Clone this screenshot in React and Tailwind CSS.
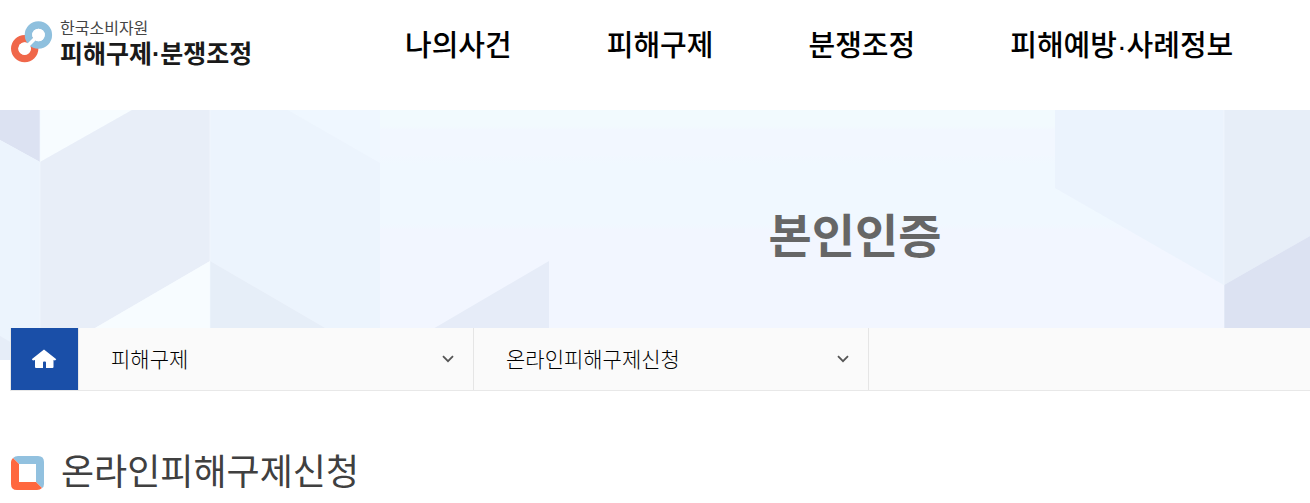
import React from 'react';

const menus = ['나의사건', '피해구제', '분쟁조정', '피해예방·사례정보'];
const paths = ['피해구제', '온라인피해구제신청'];

const LogoMark = () => (
  <svg width="42" height="42" viewBox="0 0 42 42" fill="none" aria-hidden="true">
    <circle cx="13.7" cy="27.6" r="10" stroke="#f0674a" strokeWidth="7.4" />
    <circle cx="27.4" cy="14" r="10" stroke="#8fc0de" strokeWidth="7.4" />
    <path d="M15 26.5L26 15.5" stroke="#fff" strokeWidth="3.6" />
    <circle cx="13.5" cy="27.6" r="6.2" fill="#fff" />
    <circle cx="27.6" cy="14" r="6.2" fill="#fff" />
  </svg>
);

const BannerPattern = () => (
  <svg className="absolute top-0 left-0" width="1710" height="250" viewBox="0 0 1710 250" aria-hidden="true">
    <path d="M0 0H40V52L0 30Z" fill="#dce2f2" />
    <path d="M0 30L40 52V250H0Z" fill="#ecf4fd" />
    <path d="M0 226L40 249V250H0Z" fill="#e6edf8" />
    <path d="M40 0H132L40 52Z" fill="#f7fcff" />
    <path d="M132 0H210V151L40 250V52Z" fill="#e8eef8" />
    <path d="M210 151V250H40Z" fill="#f7fcff" />
    <path d="M288 0H380V53Z" fill="#eff7ff" />
    <path d="M210 0H288L380 53V250L210 151Z" fill="#ecf4fd" />
    <path d="M210 151L380 250H210Z" fill="#e6eef8" />
    <path d="M549 151V250H380Z" fill="#e6ecf8" />
    <path d="M1055 0H1224V175L1055 78Z" fill="#ebf3fd" />
    <path d="M1224 0H1394V78L1224 175Z" fill="#e7eef8" />
    <path d="M1224 175L1394 78V250H1224Z" fill="#dce2f2" />
    <path d="M40 0V250M210 0V250M1224 0V250" stroke="#f3f8ff" strokeOpacity="0.6" />
  </svg>
);

const HomeIcon = () => (
  <svg width="26" height="20" viewBox="0 0 26 20" fill="#fff" aria-hidden="true">
    <path d="M12 0.5L24.3 10.2L23 11.6L21.5 11V18Q21.5 19 20.5 19H14V13.5Q14 12.5 13 12.5H12Q11 12.5 11 13.5V19H4Q3 19 3 18V11L1 11.6L-0.3 10.2Z" />
  </svg>
);

const ChevronIcon = () => (
  <svg width="12" height="8" viewBox="0 0 12 8" fill="none" stroke="#555" strokeWidth="1.8" aria-hidden="true">
    <path d="M1 1.2L6 6.2L11 1.2" />
  </svg>
);

const TitleMark = () => (
  <svg width="33" height="34" viewBox="0 0 33 34" aria-hidden="true">
    <path d="M2 2Q4 0 7 0H27Q33 0 33 6V28Q33 31 31 32L25 26V8H8Z" fill="#92c1df" />
    <path d="M2 2L8 8V26H25L31 32Q29 34 26 34H6Q0 34 0 28V6Q0 4 2 2Z" fill="#ff683f" />
  </svg>
);

const Header = () => (
  <header className="flex h-[110px] items-start pl-[11px]">
    <a href="#" className="mt-[21px] flex w-[394px] shrink-0 items-start gap-[7px]">
      <LogoMark />
      <span className="flex flex-col">
        <span className="text-base leading-4 text-[#444]">한국소비자원</span>
        <span className="text-[25px] leading-[34px] font-bold text-[#1a1a1a]">피해구제·분쟁조정</span>
      </span>
    </a>
    <nav className="mt-[26px] flex gap-[95px] whitespace-nowrap">
      {menus.map((menu) => (
        <a key={menu} href="#" className="text-[29px] leading-10 font-medium text-black">
          {menu}
        </a>
      ))}
    </nav>
  </header>
);

const Breadcrumb = () => (
  <nav className="relative -mt-8 ml-[10px] flex h-[63px] border-b border-l border-[#e8e8e8] bg-[#fafafa]">
    <a
      href="#"
      aria-label="홈"
      className="flex w-[68px] shrink-0 items-center justify-center border-r border-[#e8e8e8] bg-[#1a4fa8]"
    >
      <HomeIcon />
    </a>
    {paths.map((path) => (
      <button
        key={path}
        type="button"
        aria-haspopup="true"
        className="flex w-[395px] items-center justify-between border-r border-[#e5e5e5] pr-[19px] pl-8 text-[21px] font-light text-black"
      >
        <span className="pt-[2px]">{path}</span>
        <ChevronIcon />
      </button>
    ))}
  </nav>
);

const App = () => {
  return (
    <div className="overflow-hidden bg-white font-['Liberation_Sans','Noto_Sans_CJK_KR',sans-serif]">
      <Header />
      <section className="relative h-[250px] overflow-hidden bg-[linear-gradient(#f2fafe_0px,#f2fafe_16px,#f2f7ff_20px,#f2f7ff_44px,#f0f8ff_54px,#f0f8ff_114px,#f2f6ff_120px)]">
        <BannerPattern />
        <h1 className="relative pt-[92px] pl-[400px] text-center text-[47px] leading-[70px] font-bold text-[#666]">
          본인인증
        </h1>
      </section>
      <Breadcrumb />
      <main className="flex items-center gap-[17px] pt-[57px] pl-[11px]">
        <TitleMark />
        <h2 className="text-4xl leading-[50px] text-[#404040]">온라인피해구제신청</h2>
      </main>
    </div>
  );
};

export default App;
